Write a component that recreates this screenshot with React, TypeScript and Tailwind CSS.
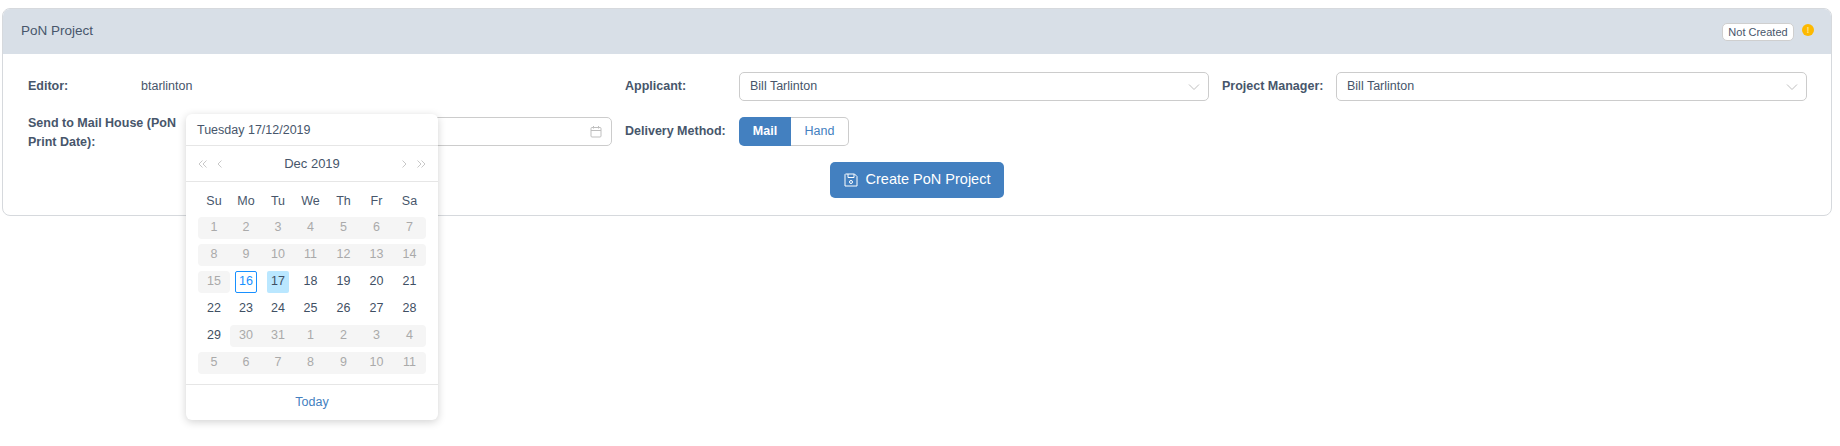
const labelCls = "font-bold text-[12.5px] leading-[19px] text-[#47566b]";

function Chevron() {
  return (
    <svg width="12" height="8" viewBox="0 0 12 8" fill="none" stroke="#bfbfbf" strokeWidth="1" className="shrink-0">
      <path d="M1 1.5 L6 6.5 L11 1.5" />
    </svg>
  );
}

function SelectBox({ value }: { value: string }) {
  return (
    <div className="flex h-[29px] flex-1 items-center justify-between rounded-[5px] border border-[#cccccc] bg-white pl-[10px] pr-[8px]">
      <span className="mb-[1px] text-[12.5px] text-[#47566b]">{value}</span>
      <Chevron />
    </div>
  );
}

function DoubleArrow({ dir }: { dir: "l" | "r" }) {
  return (
    <svg width="10" height="8" viewBox="0 0 10 8" fill="none" stroke="#c8c8c8" strokeWidth="1">
      {dir === "l" ? <path d="M4.5 0.5 L1 4 L4.5 7.5 M8.5 0.5 L5 4 L8.5 7.5" /> : <path d="M1.5 0.5 L5 4 L1.5 7.5 M5.5 0.5 L9 4 L5.5 7.5" />}
    </svg>
  );
}

function SingleArrow({ dir }: { dir: "l" | "r" }) {
  return (
    <svg width="5" height="8" viewBox="0 0 5 8" fill="none" stroke="#c8c8c8" strokeWidth="1">
      {dir === "l" ? <path d="M4.5 0.5 L1 4 L4.5 7.5" /> : <path d="M0.5 0.5 L4 4 L0.5 7.5" />}
    </svg>
  );
}

const weeks: string[][] = [
  ["1", "2", "3", "4", "5", "6", "7"],
  ["8", "9", "10", "11", "12", "13", "14"],
  ["15", "16", "17", "18", "19", "20", "21"],
  ["22", "23", "24", "25", "26", "27", "28"],
  ["29", "30", "31", "1", "2", "3", "4"],
  ["5", "6", "7", "8", "9", "10", "11"],
];

function isOff(w: number, d: number) {
  if (w < 2) return true;
  if (w === 2) return d === 0;
  if (w === 4) return d >= 1;
  return w === 5;
}

const gridCols = "grid grid-cols-[32px_32px_32px_33px_33px_33px_33px]";

function Calendar() {
  return (
    <div className="absolute left-[186px] top-[114px] z-10 w-[252px] rounded-[6px] bg-white text-[12.5px] text-[#47566b] shadow-[0_2px_8px_rgba(0,0,0,0.18)]">
      <div className="flex h-[32px] items-center border-b border-[#e6e6e6] pl-[11px] pt-[1px] text-[12.5px]">Tuesday 17/12/2019</div>
      <div className="flex h-[36px] items-center justify-between border-b border-[#e6e6e6] px-[12px]">
        <div className="flex items-center gap-[9px]">
          <DoubleArrow dir="l" />
          <SingleArrow dir="l" />
        </div>
        <span className="text-[13px]">Dec 2019</span>
        <div className="flex items-center gap-[9px]">
          <SingleArrow dir="r" />
          <DoubleArrow dir="r" />
        </div>
      </div>
      <div className="px-[12px] pt-[7px] pb-[10px]">
        <div className={gridCols + " mb-[4px] h-[24px] items-center text-center"}>
          {["Su", "Mo", "Tu", "We", "Th", "Fr", "Sa"].map((d) => (
            <span key={d}>{d}</span>
          ))}
        </div>
        <div className="flex flex-col gap-[5px]">
          {weeks.map((week, w) => (
            <div key={w} className={gridCols + " h-[22px]"}>
              {week.map((t, d) => {
                const off = isOff(w, d);
                const prevOff = d > 0 && isOff(w, d - 1);
                const nextOff = d < 6 && isOff(w, d + 1);
                const isToday = w === 2 && d === 1;
                const isSel = w === 2 && d === 2;
                return (
                  <div
                    key={d}
                    className={
                      "flex items-center justify-center " +
                      (isToday || isSel ? "" : "pb-[2px] ") +
                      (off ? "bg-[#f5f5f5] text-[#aaaaaa] " : "text-[#3f4f63] ") +
                      (off && !prevOff ? "rounded-l-[4px] " : "") +
                      (off && !nextOff ? "rounded-r-[4px] " : "")
                    }
                  >
                    {isToday ? (
                      <span className="flex h-[22px] w-[22px] items-center justify-center rounded-[2px] border border-[#1890ff] pb-[2px] text-[#1890ff]">{t}</span>
                    ) : isSel ? (
                      <span className="flex h-[22px] w-[22px] items-center justify-center rounded-[2px] bg-[#bae7ff] pb-[2px]">{t}</span>
                    ) : (
                      t
                    )}
                  </div>
                );
              })}
            </div>
          ))}
        </div>
      </div>
      <div className="flex h-[36px] items-center justify-center border-t border-[#e6e6e6] text-[#4380c0]">Today</div>
    </div>
  );
}

export default function App() {
  return (
    <div className="relative h-[446px] bg-white pt-[8px] pl-[2px] pr-[8px] [font-family:'Liberation_Sans',Arial,sans-serif]">
      <div className="h-[208px] rounded-[8px] border border-[#d6d9dd]">
        <div className="flex h-[45px] items-center justify-between rounded-t-[7px] bg-[#d8dfe7] pl-[18px] pr-[17px]">
          <span className="mb-[1px] text-[13.5px] text-[#47566b]">PoN Project</span>
          <div className="flex items-center gap-[8px]">
            <span className="mt-[1px] flex h-[18px] w-[72px] items-center justify-center rounded-[5px] border border-[#cfcfcf] bg-white text-[11px] text-[#47566b]">Not Created</span>
            <span className="mb-[3px] flex h-[12px] w-[12px] items-center justify-center rounded-full bg-[#fdb900] text-[9px] font-bold leading-none text-[#ffe58a]">!</span>
          </div>
        </div>
        <div className="flex flex-col pl-[25px] pr-[24px] pt-[18px]">
          <div className="flex gap-[13px]">
            <div className="flex w-[584px] items-center">
              <span className={labelCls + " w-[113px]"}>Editor:</span>
              <span className="text-[12.5px] text-[#47566b]">btarlinton</span>
            </div>
            <div className="flex w-[584px] items-center">
              <span className={labelCls + " w-[114px]"}>Applicant:</span>
              <SelectBox value="Bill Tarlinton" />
            </div>
            <div className="flex w-[585px] items-center">
              <span className={labelCls + " w-[114px]"}>Project Manager:</span>
              <SelectBox value="Bill Tarlinton" />
            </div>
          </div>
          <div className="mt-[16px] flex h-[29px] gap-[13px]">
            <div className="flex w-[584px] items-start">
              <span className={labelCls + " -mt-[3px] w-[165px] shrink-0 leading-[18px]"}>Send to Mail House (PoN Print Date):</span>
              <div className="flex h-[29px] flex-1 items-center justify-end rounded-[5px] border border-[#cccccc] bg-white pr-[9px]">
                <svg width="12" height="13" viewBox="0 0 12 13" fill="none" stroke="#bfbfbf" strokeWidth="1">
                  <rect x="1" y="2.5" width="10" height="9.5" rx="1" />
                  <path d="M1 5.5 H11 M3.5 1 V3.5 M8.5 1 V3.5" />
                </svg>
              </div>
            </div>
            <div className="flex items-center">
              <span className={labelCls + " w-[114px]"}>Delivery Method:</span>
              <div className="flex h-[29px] text-[12.5px]">
                <span className="flex w-[52px] items-center justify-center rounded-l-[5px] bg-[#4380c0] font-bold text-white">Mail</span>
                <span className="flex w-[58px] items-center justify-center rounded-r-[5px] border border-l-0 border-[#cccccc] text-[#4380c0]">Hand</span>
              </div>
            </div>
          </div>
          <div className="mt-[16px] flex justify-center pr-[1px]">
            <button className="flex h-[36px] w-[174px] items-center justify-center gap-[8px] rounded-[5px] bg-[#4380c0] text-[14.5px] text-white">
              <svg width="14" height="14" viewBox="0 0 14 14" fill="none" stroke="white" strokeWidth="1">
                <path d="M1.5 1 H10.5 L13 3.5 V13 H1 V1.5 Z" />
                <path d="M4 1 V4.5 H10 V1" />
                <circle cx="7" cy="9" r="1.5" />
              </svg>
              Create PoN Project
            </button>
          </div>
        </div>
      </div>
      <Calendar />
    </div>
  );
}
